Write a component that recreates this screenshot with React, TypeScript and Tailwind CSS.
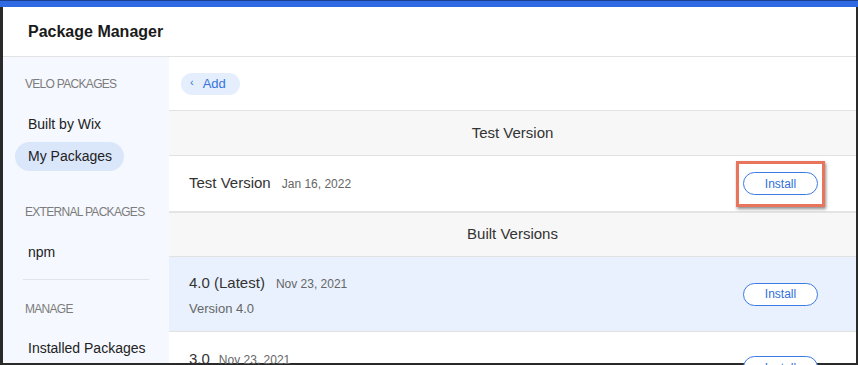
import React from "react";

function InstallButton() {
  return (
    <button className="w-[75px] h-[23px] rounded-full border border-[#3c7ae4] bg-white text-[12px] text-[#2f6fdc] flex items-center justify-center leading-none">
      Install
    </button>
  );
}

function SideLabel({ children, mt }: { children: React.ReactNode; mt: string }) {
  return (
    <div className={`h-[24px] flex items-center pl-[22px] text-[12px] tracking-[-0.7px] text-[#7c7c7c] uppercase ${mt}`}>
      {children}
    </div>
  );
}

export default function App() {
  return (
    <div
      className="w-[858px] h-[365px] overflow-hidden flex flex-col bg-white"
      style={{ fontFamily: '"Liberation Sans", Arial, sans-serif' }}
    >
      <div className="h-[1px] bg-[#1d3f8f]" />
      <div className="h-[6px] bg-[#2f6ae4]" />
      <div className="flex-1 flex flex-col border-l-[3px] border-r-[2px] border-b-[2px] border-[#2a2a2a] min-h-0">
        {/* Header */}
        <div className="h-[50px] shrink-0 flex items-center pl-[25px] border-b border-[#e2e2e2]">
          <span className="text-[16px] font-bold text-[#1a1a1a]">Package Manager</span>
        </div>
        <div className="flex-1 flex min-h-0">
          {/* Sidebar */}
          <div className="w-[166px] shrink-0 bg-[#f5f8fe] flex flex-col">
            <SideLabel mt="mt-[15px]">Velo Packages</SideLabel>
            <div className="h-[29px] mt-[14px] flex items-center pl-[25px] text-[14px] text-[#222]">Built by Wix</div>
            <div className="h-[29px] mt-[4px] ml-[12px] w-[109px] rounded-full bg-[#dae7fb] flex items-center pl-[13px] text-[14px] text-[#222]">
              My Packages
            </div>
            <SideLabel mt="mt-[29px]">External Packages</SideLabel>
            <div className="h-[29px] mt-[14px] flex items-center pl-[25px] text-[14px] text-[#222]">npm</div>
            <div className="mt-[12px] ml-[20px] w-[126px] h-[1px] bg-[#e0e3e8]" />
            <SideLabel mt="mt-[18px]">Manage</SideLabel>
            <div className="h-[29px] mt-[13px] flex items-center pl-[25px] text-[14px] text-[#222]">Installed Packages</div>
          </div>
          {/* Main */}
          <div className="flex-1 flex flex-col min-w-0">
            <div className="h-[54px] shrink-0 flex items-center pl-[12px] border-b border-[#e2e2e2]">
              <div className="h-[22px] w-[59px] rounded-full bg-[#e5eefc] flex items-center pl-[9px] gap-[9px] text-[#3573e0]">
                <span className="text-[11px] leading-none -mt-[2px]">‹</span>
                <span className="text-[13px]">Add</span>
              </div>
            </div>
            <div className="h-[45px] shrink-0 bg-[#f7f7f7] border-b border-[#e2e2e2] flex items-center justify-center text-[15px] text-[#333]">
              Test Version
            </div>
            <div className="h-[57px] shrink-0 flex items-center justify-between pl-[20px] pr-[38px] border-b-2 border-[#e4e4e4]">
              <div className="flex items-baseline gap-[11px]">
                <span className="text-[15px] text-[#333]">Test Version</span>
                <span className="text-[12px] text-[#666]">Jan 16, 2022</span>
              </div>
              <div className="relative">
                <InstallButton />
                <div className="absolute -left-[7px] -right-[7px] -top-[11px] -bottom-[12px] border-[3px] border-[#e8745b] shadow-[1px_2px_3px_rgba(0,0,0,0.45)] pointer-events-none" />
              </div>
            </div>
            <div className="h-[44px] shrink-0 bg-[#f7f7f7] border-b border-[#e2e2e2] flex items-center justify-center text-[15px] text-[#333]">
              Built Versions
            </div>
            <div className="h-[75px] shrink-0 bg-[#e8f1fd] border-b border-[#e2e2e2] flex items-center justify-between pl-[20px] pr-[38px]">
              <div className="flex flex-col gap-[5px] mt-[2px]">
                <div className="flex items-baseline gap-[11px]">
                  <span className="text-[15px] text-[#333]">4.0 (Latest)</span>
                  <span className="text-[12px] text-[#666]">Nov 23, 2021</span>
                </div>
                <span className="text-[13px] text-[#666]">Version 4.0</span>
              </div>
              <InstallButton />
            </div>
            <div className="h-[75px] shrink-0 flex items-start justify-between pl-[20px] pr-[38px] pt-[16px]">
              <div className="flex items-baseline gap-[9px]">
                <span className="text-[15px] text-[#333]">3.0</span>
                <span className="text-[12px] text-[#666]">Nov 23, 2021</span>
              </div>
              <div className="mt-[8px]">
                <InstallButton />
              </div>
            </div>
          </div>
        </div>
      </div>
    </div>
  );
}
